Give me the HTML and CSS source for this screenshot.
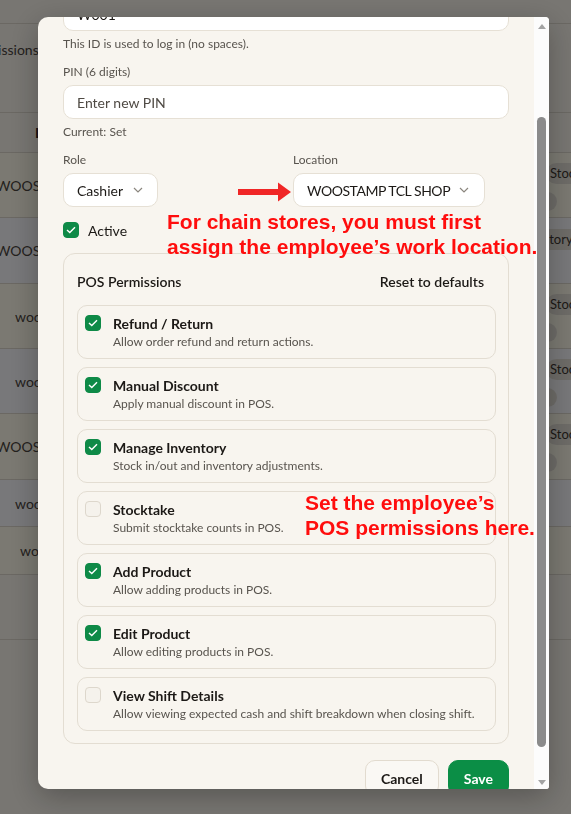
FILE: index.html
```html
<!DOCTYPE html>
<html lang="en">
<head>
<meta charset="utf-8">
<title>Edit Employee</title>
<link rel="stylesheet" href="styles.css">
</head>
<body>
<div class="page">
  <div class="bg-row h24"></div>
  <div class="bg-row h89 top"><span class="cl perm-h">Permissions</span></div>
  <div class="bg-row h40"><span class="cl loc-h">Location</span></div>
  <div class="bg-row h65 tint-a"><span class="cl shop">WOOSTAMP TCL SHOP</span><span class="cr"><span class="pill">Stocktake</span><span class="dot"></span></span></div>
  <div class="bg-row h66 tint-b"><span class="cl shop">WOOSTAMP TCL SHOP</span><span class="cr"><span class="pill pill-cut">Inventory</span></span></div>
  <div class="bg-row h65 tint-a"><span class="cl woo">woostamp</span><span class="cr"><span class="pill">Stocktake</span><span class="dot"></span></span></div>
  <div class="bg-row h65 tint-b"><span class="cl woo">woostamp</span><span class="cr"><span class="pill">Stocktake</span><span class="dot"></span></span></div>
  <div class="bg-row h66 tint-a"><span class="cl shop">WOOSTAMP TCL SHOP</span><span class="cr"><span class="pill">Stocktake</span><span class="dot"></span></span></div>
  <div class="bg-row h47 tint-b"><span class="cl woo">woostamp</span></div>
  <div class="bg-row h48 tint-a"><span class="cl wo">woostamp</span></div>
  <div class="bg-row h65"></div>
</div>

<div class="backdrop"></div>

<div class="modal">
  <div class="modal-body">
    <div class="modal-scroll">
      <input class="input id-input" type="text" value="W001">
      <p class="hint">This ID is used to log in (no spaces).</p>
      <label class="label">PIN (6 digits)</label>
      <input class="input" type="text" placeholder="Enter new PIN">
      <p class="hint">Current: Set</p>

      <div class="grid2">
        <div class="field">
          <label class="label">Role</label>
          <div class="select select-role"><span>Cashier</span><svg class="chev" width="10" height="6" viewBox="0 0 10 6"><polyline points="1,1 5,5 9,1" fill="none" stroke="#8b867e" stroke-width="1.2"/></svg></div>
        </div>
        <div class="field">
          <label class="label">Location</label>
          <div class="select select-loc"><span class="loc-text">WOOSTAMP TCL SHOP</span><svg class="chev" width="10" height="6" viewBox="0 0 10 6"><polyline points="1,1 5,5 9,1" fill="none" stroke="#8b867e" stroke-width="1.2"/></svg></div>
        </div>
      </div>

      <div class="check-line">
        <span class="cb on"><svg width="10" height="8" viewBox="0 0 10 8"><polyline points="1,4 3.8,6.6 9,1.2" fill="none" stroke="#fff" stroke-width="1.4"/></svg></span>
        <span class="check-text">Active</span>
      </div>

      <section class="perms">
        <div class="perms-head">
          <span class="perms-title">POS Permissions</span>
          <button class="reset">Reset to defaults</button>
        </div>
        <div class="perm-list">
          <div class="perm">
            <span class="cb on"><svg width="10" height="8" viewBox="0 0 10 8"><polyline points="1,4 3.8,6.6 9,1.2" fill="none" stroke="#fff" stroke-width="1.4"/></svg></span>
            <div class="perm-text"><div class="perm-name">Refund / Return</div><div class="perm-desc">Allow order refund and return actions.</div></div>
          </div>
          <div class="perm">
            <span class="cb on"><svg width="10" height="8" viewBox="0 0 10 8"><polyline points="1,4 3.8,6.6 9,1.2" fill="none" stroke="#fff" stroke-width="1.4"/></svg></span>
            <div class="perm-text"><div class="perm-name">Manual Discount</div><div class="perm-desc">Apply manual discount in POS.</div></div>
          </div>
          <div class="perm">
            <span class="cb on"><svg width="10" height="8" viewBox="0 0 10 8"><polyline points="1,4 3.8,6.6 9,1.2" fill="none" stroke="#fff" stroke-width="1.4"/></svg></span>
            <div class="perm-text"><div class="perm-name">Manage Inventory</div><div class="perm-desc">Stock in/out and inventory adjustments.</div></div>
          </div>
          <div class="perm">
            <span class="cb"></span>
            <div class="perm-text"><div class="perm-name">Stocktake</div><div class="perm-desc">Submit stocktake counts in POS.</div></div>
          </div>
          <div class="perm">
            <span class="cb on"><svg width="10" height="8" viewBox="0 0 10 8"><polyline points="1,4 3.8,6.6 9,1.2" fill="none" stroke="#fff" stroke-width="1.4"/></svg></span>
            <div class="perm-text"><div class="perm-name">Add Product</div><div class="perm-desc">Allow adding products in POS.</div></div>
          </div>
          <div class="perm">
            <span class="cb on"><svg width="10" height="8" viewBox="0 0 10 8"><polyline points="1,4 3.8,6.6 9,1.2" fill="none" stroke="#fff" stroke-width="1.4"/></svg></span>
            <div class="perm-text"><div class="perm-name">Edit Product</div><div class="perm-desc">Allow editing products in POS.</div></div>
          </div>
          <div class="perm">
            <span class="cb"></span>
            <div class="perm-text"><div class="perm-name">View Shift Details</div><div class="perm-desc">Allow viewing expected cash and shift breakdown when closing shift.</div></div>
          </div>
        </div>
      </section>

      <div class="actions">
        <button class="btn">Cancel</button>
        <button class="btn primary">Save</button>
      </div>
    </div>
  </div>
  <div class="scrollbar">
    <span class="sb-btn"><span class="tri up"></span></span>
    <span class="sb-track"><span class="thumb"></span></span>
    <span class="sb-btn"><span class="tri down"></span></span>
  </div>
</div>

<svg class="red-arrow" width="54" height="22" viewBox="0 0 54 22"><polygon points="0,8 40,8 40,1.5 53,11 40,20.5 40,14 0,14" fill="#f02626"/></svg>
<div class="note note-1">For chain stores, you must first<br>assign the employee’s work location.</div>
<div class="note note-2">Set the employee’s<br>POS permissions here.</div>
</body>
</html>
```

FILE: styles.css
```css
* { box-sizing: border-box; }

html, body {
  margin: 0;
  padding: 0;
}

body {
  width: 571px;
  height: 814px;
  overflow: hidden;
  background: #f1ede5;
  font-family: Lato, "Noto Sans", sans-serif;
  color: #1c1916;
}

/* ---------- background page ---------- */
.page {
  width: 571px;
  overflow: hidden;
}

.bg-row {
  display: flex;
  align-items: center;
  border-bottom: 1px solid #d6d1c7;
  font-size: 14px;
  color: #48423c;
  white-space: nowrap;
}
.bg-row.top { align-items: flex-start; padding-top: 17px; }
.h24 { height: 24px; }
.h89 { height: 89px; }
.h40 { height: 40px; }
.h65 { height: 65px; }
.h66 { height: 66px; }
.h47 { height: 47px; }
.h48 { height: 48px; }
.tint-a { background: #f6f3e4; }
.tint-b { background: #f1f1f4; }

.cl {
  width: 538px;
  flex: none;
  overflow: hidden;
}
.perm-h { margin-left: -34px; width: 572px; }
.loc-h { padding-left: 35px; font-weight: 700; color: #2a2520; }
.shop { margin-left: -4px; width: 542px; }
.woo { padding-left: 15px; }
.wo { padding-left: 20px; }

.cr {
  width: 33px;
  flex: none;
  overflow: hidden;
  display: flex;
  flex-direction: column;
  align-self: flex-start;
  padding-top: 10px;
  gap: 8px;
}
.pill {
  display: inline-block;
  margin-left: 8px;
  height: 21px;
  line-height: 21px;
  padding: 0 8px 0 4px;
  border-radius: 11px;
  background: #dcd8d0;
  color: #3b3530;
  font-size: 13px;
  width: max-content;
}
.pill-cut { margin-left: -30px; padding-left: 10px; margin-top: 1px; }
.dot {
  width: 19px;
  height: 19px;
  border-radius: 50%;
  background: #dcd8d0;
}

.backdrop {
  position: fixed;
  inset: 0;
  background: rgba(0, 0, 0, 0.5);
}

/* ---------- modal ---------- */
.modal {
  position: fixed;
  left: 38px;
  top: 17px;
  width: 511px;
  height: 772px;
  display: flex;
  background: #f8f5ef;
  border-radius: 10px 4px 3px 10px;
  overflow: hidden;
  box-shadow: 0 8px 30px rgba(0, 0, 0, 0.28);
}

.modal-body {
  width: 496px;
  flex: none;
  overflow: hidden;
}

.modal-scroll {
  padding: 0 25px;
  display: flex;
  flex-direction: column;
}

.input {
  display: block;
  width: 100%;
  height: 34px;
  border: 1px solid #e6e0d5;
  border-radius: 10px;
  background: #fff;
  padding: 0 13px;
  font-family: inherit;
  font-size: 14px;
  color: #1c1916;
  outline: none;
}
.input::placeholder { color: #4f4a44; }
.id-input { margin-top: -20px; }

.hint {
  margin: 5px 0 0;
  font-size: 12px;
  line-height: 16px;
  color: #58544e;
}

.label {
  display: block;
  margin: 12px 0 5px;
  font-size: 12px;
  line-height: 16px;
  color: #58544e;
}

.grid2 {
  display: grid;
  grid-template-columns: 1fr 1fr;
  column-gap: 14px;
}
.field { display: flex; flex-direction: column; align-items: flex-start; }

.select {
  height: 34px;
  display: inline-flex;
  align-items: center;
  gap: 10px;
  padding: 0 14px 0 13px;
  background: #fff;
  border: 1px solid #e6e0d5;
  border-radius: 10px;
  font-size: 14px;
  color: #1c1916;
}
.select-loc { gap: 9px; padding-right: 15px; }
.loc-text { letter-spacing: -0.45px; }
.chev { display: block; }

.check-line {
  display: flex;
  align-items: center;
  gap: 9px;
  margin-top: 15px;
  height: 16px;
  font-size: 14px;
}

.cb {
  width: 16px;
  height: 16px;
  flex: none;
  border-radius: 4px;
  border: 1px solid #ddd7cc;
  background: #f5f2ec;
  display: flex;
  align-items: center;
  justify-content: center;
}
.cb.on {
  background: #0e8a47;
  border-color: #0e8a47;
}

.perms {
  margin-top: 15px;
  border: 1px solid #e3ddd2;
  border-radius: 12px;
  padding: 18px 12px 12px 13px;
}

.perms-head {
  display: flex;
  justify-content: space-between;
  align-items: center;
  height: 18px;
}
.perms-title {
  font-size: 14px;
  font-weight: 600;
  color: #1c1916;
}
.reset {
  border: 0;
  background: none;
  padding: 0 12px 0 0;
  font-family: inherit;
  font-size: 14px;
  font-weight: 600;
  color: #1c1916;
}

.perm-list {
  margin-top: 15px;
  display: flex;
  flex-direction: column;
  gap: 8px;
}

.perm {
  height: 54px;
  border: 1px solid #e3ddd2;
  border-radius: 10px;
  padding: 9px 10px 0 7px;
  display: flex;
  align-items: flex-start;
  gap: 12px;
}

.perm-name {
  font-size: 14px;
  font-weight: 700;
  line-height: 18px;
  color: #1c1916;
}
.perm-desc {
  font-size: 12px;
  line-height: 16px;
  margin-top: 1px;
  color: #58544e;
}

.actions {
  display: flex;
  justify-content: flex-end;
  gap: 9px;
  margin-top: 16px;
}
.btn {
  height: 36px;
  padding: 0 15px;
  border-radius: 10px;
  border: 1px solid #e2dbcf;
  background: #faf8f4;
  font-family: inherit;
  font-size: 14px;
  font-weight: 700;
  color: #1c1916;
}
.btn.primary {
  background: #0b8e46;
  border-color: #0b8e46;
  color: #fff;
  padding: 0 15px;
}

/* ---------- fake scrollbar ---------- */
.scrollbar {
  width: 15px;
  flex: none;
  background: #fcfcfc;
  display: flex;
  flex-direction: column;
  align-items: center;
}
.sb-btn {
  height: 17px;
  width: 15px;
  display: flex;
  align-items: center;
  justify-content: center;
  flex: none;
}
.sb-track {
  flex: 1;
  display: flex;
  flex-direction: column;
  align-items: center;
}
.thumb {
  margin-top: 83px;
  width: 9px;
  height: 630px;
  border-radius: 5px;
  background: #8b8b8b;
}
.tri {
  width: 0;
  height: 0;
  border-left: 4px solid transparent;
  border-right: 4px solid transparent;
}
.tri.up { border-bottom: 5px solid #a3a3a3; margin-top: 1px; }
.tri.down { border-top: 5px solid #a3a3a3; margin-top: 3px; }

/* ---------- annotations ---------- */
.red-arrow {
  position: absolute;
  left: 238px;
  top: 181px;
}
.note {
  position: absolute;
  font-family: "Liberation Sans", Arial, sans-serif;
  font-weight: 700;
  font-size: 21px;
  line-height: 24.6px;
  color: #ff0d0d;
  white-space: nowrap;
}
.note-1 { left: 167px; top: 210px; }
.note-2 { left: 305px; top: 491px; }
```
